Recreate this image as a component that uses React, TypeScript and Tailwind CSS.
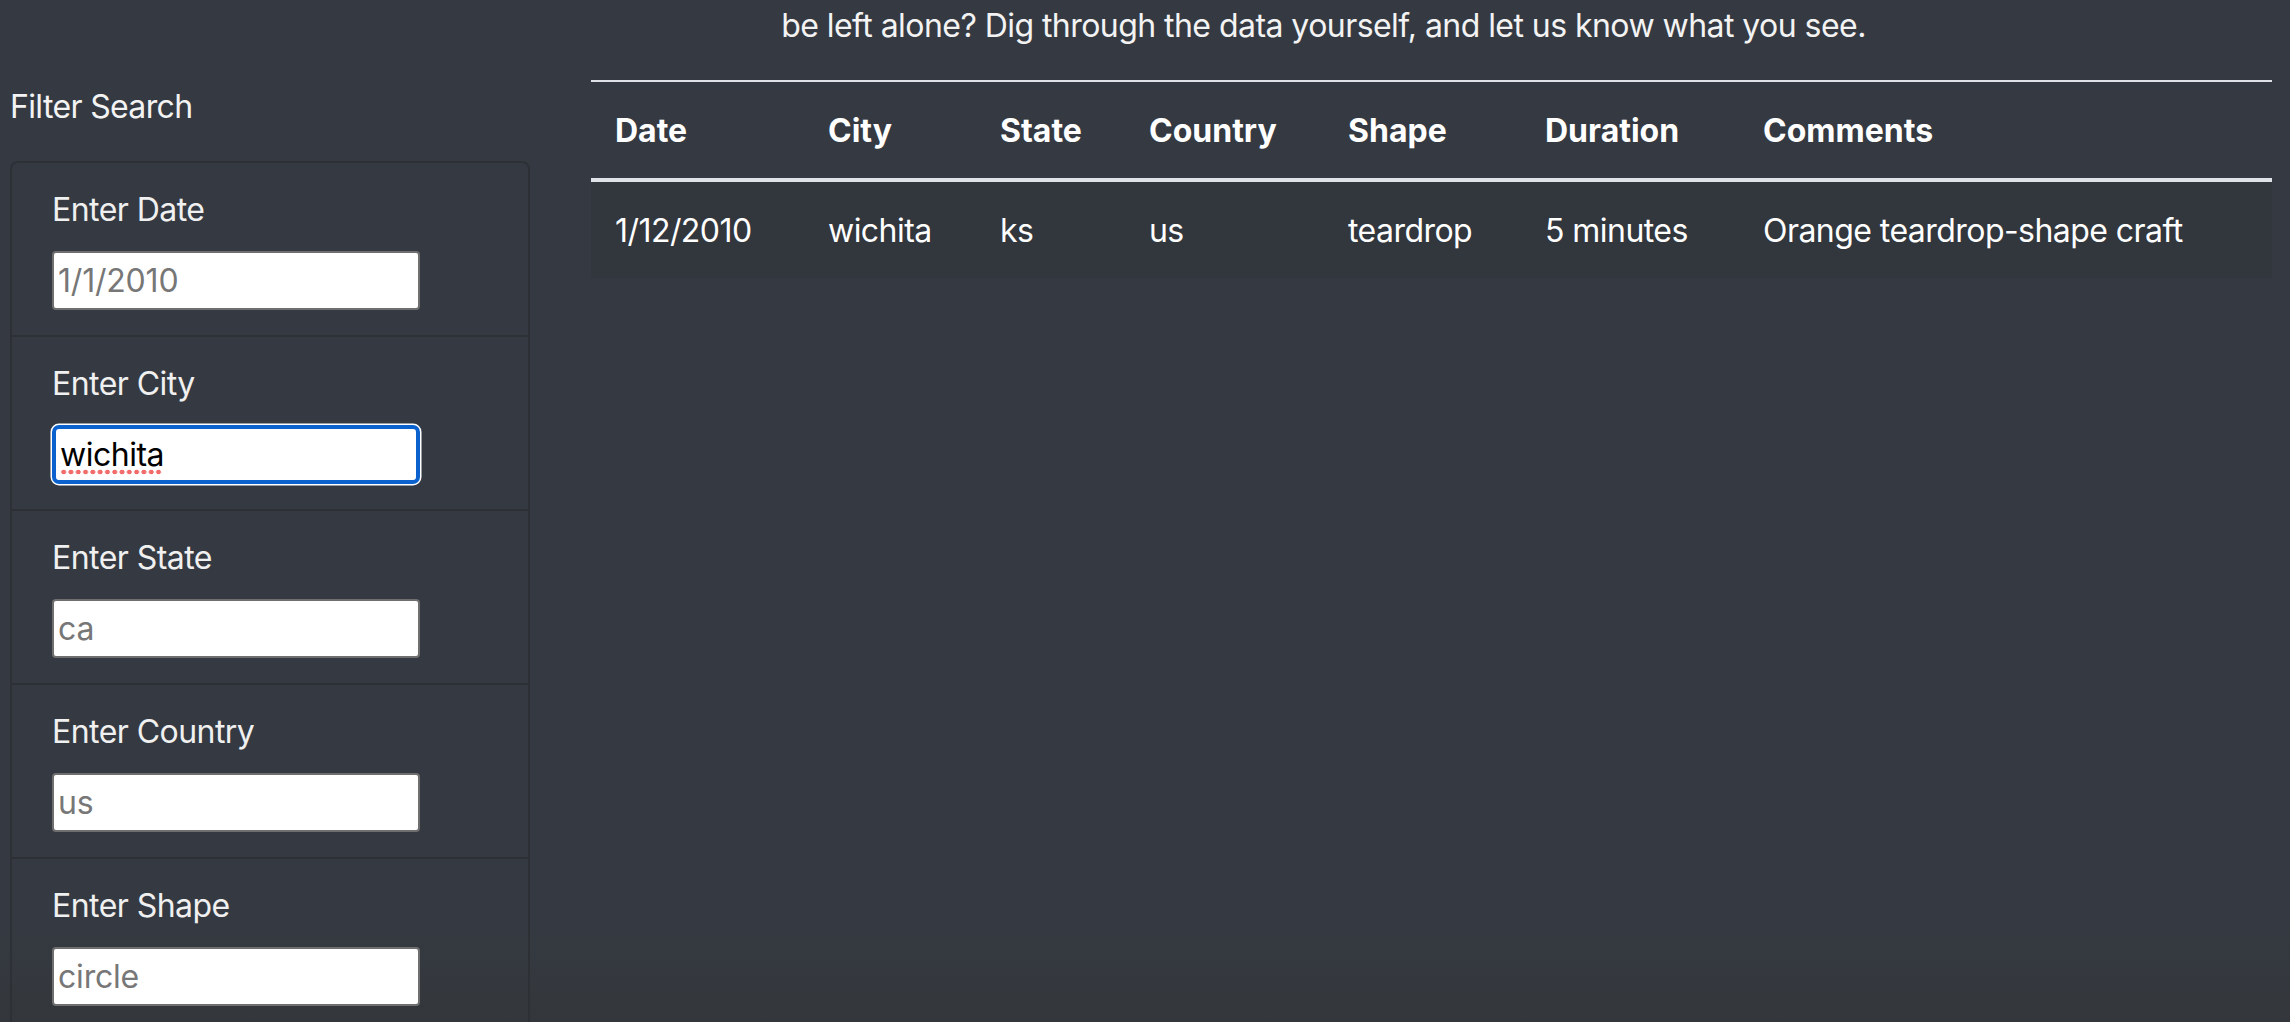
import React from "react";

const cols = [
  { h: "Date", w: "w-[213px]", v: "1/12/2010" },
  { h: "City", w: "w-[172px]", v: "wichita" },
  { h: "State", w: "w-[149px]", v: "ks" },
  { h: "Country", w: "w-[199px]", v: "us" },
  { h: "Shape", w: "w-[197px]", v: "teardrop" },
  { h: "Duration", w: "w-[218px]", v: "5 minutes" },
  { h: "Comments", w: "w-[533px]", v: "Orange teardrop-shape craft" },
];

const filters = [
  { label: "Enter Date", ph: "1/1/2010" },
  { label: "Enter City", ph: "", value: "wichita", focus: true },
  { label: "Enter State", ph: "ca" },
  { label: "Enter Country", ph: "us" },
  { label: "Enter Shape", ph: "circle" },
];

function FilterItem({ f, first }: { f: (typeof filters)[number]; first: boolean }) {
  return (
    <li
      className={`px-[40px] pt-[25px] pb-[25px] border-[#2d3136] border-x-2 ${
        first ? "border-t-2 rounded-t-[8px]" : "border-t-2"
      }`}
    >
      <label className="block text-[32px] leading-[43px] tracking-[-0.55px] text-[#f0f0f0]">{f.label}</label>
      <div className="relative mt-[20px] w-[368px] h-[59px]">
        {f.focus ? (
          <>
            <input
              readOnly
              defaultValue={f.value}
              className="block w-[368px] h-[59px] bg-white rounded-[7px] border-[4px] border-[#0b62cf] shadow-[0_0_0_1.5px_#ffffff] px-[4px] text-[32px] tracking-[-0.5px] text-black outline-none"
            />
            <div className="absolute left-[8px] top-[44px] w-[102px] h-[6px] bg-[radial-gradient(circle,#f26b6b_2.2px,transparent_2.6px)] bg-[length:7.3px_6px] bg-repeat-x" />
          </>
        ) : (
          <input
            readOnly
            placeholder={f.ph}
            className="block w-[368px] h-[59px] bg-white rounded-[4px] border-2 border-[#6f6f6f] px-[4px] text-[32px] tracking-[-0.2px] text-black placeholder:text-[#777777] outline-none"
          />
        )}
      </div>
    </li>
  );
}

export default function App() {
  return (
    <div
      className="w-[2290px] h-[1022px] overflow-hidden bg-[linear-gradient(to_bottom,#353a42_0%,#353a42_90%,#33373b_100%)] text-white"
      style={{ fontFamily: "Inter, 'Noto Sans', sans-serif" }}
    >
      <p className="pt-[4px] pl-[357px] text-center text-[32px] leading-[43px] text-[#f3f3f3] mb-[33px] tracking-[-0.55px] whitespace-nowrap">
        be left alone? Dig through the data yourself, and let us know what you see.
      </p>
      <div className="flex">
        <aside className="w-[591px] pl-[10px]">
          <div className="pt-[3px] text-[32px] leading-[48px] tracking-[-0.65px] text-[#f3f3f3]">Filter Search</div>
          <ul className="mt-[30px] w-[520px]">
            {filters.map((f, i) => (
              <FilterItem key={f.label} f={f} first={i === 0} />
            ))}
          </ul>
        </aside>
        <div className="w-[1681px]">
          <table className="w-[1681px] table-fixed border-collapse text-[32px] leading-[48px]">
            <thead>
              <tr className="border-t-2 border-[#dfe2e6]">
                {cols.map((c) => (
                  <th
                    key={c.h}
                    className={`${c.w} px-[24px] pt-[25px] pb-[23px] text-left font-bold align-bottom border-b-4 border-[#dfe2e6]`}
                  >
                    {c.h}
                  </th>
                ))}
              </tr>
            </thead>
            <tbody>
              <tr className="bg-[#32363d]">
                {cols.map((c) => (
                  <td key={c.h} className="px-[24px] pt-[25px] pb-[23px] text-left whitespace-nowrap tracking-[-0.55px]">
                    {c.v}
                  </td>
                ))}
              </tr>
            </tbody>
          </table>
        </div>
      </div>
    </div>
  );
}
